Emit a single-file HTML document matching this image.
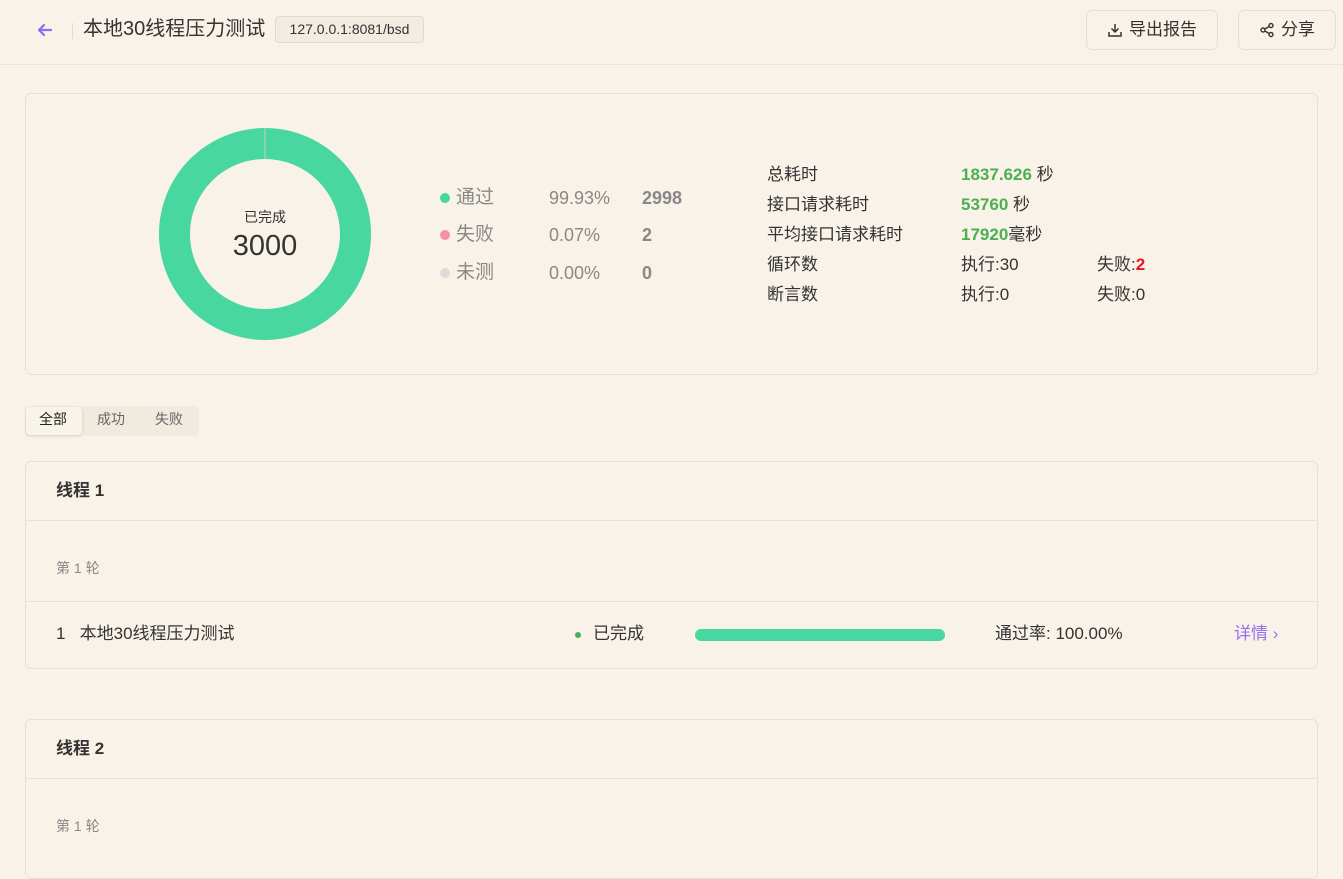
<!DOCTYPE html>
<html><head><meta charset="utf-8"><style>
*{box-sizing:border-box;margin:0;padding:0}
body{width:1343px;height:855px;overflow:hidden;background:#f9f2e8;font-family:"Liberation Sans","Noto Sans CJK SC",sans-serif;color:#333;position:relative}
.abs{position:absolute;line-height:1.2}
.hdr{left:0;top:0;width:1343px;height:65px;border-bottom:1px solid #ebe4d8}
.btn{border:1px solid #e6ded1;border-radius:6px;height:40px;top:10px;display:flex;align-items:center;justify-content:center;font-size:17px;color:#333;gap:6px}
.card{border:1px solid #e8e0d3;border-radius:6px;left:25px;width:1293px}
.g{color:#4caf50;font-weight:bold}
.t16{font-size:17px;color:#333}
.row{position:absolute;left:440px;height:24px;display:flex;align-items:center;font-size:18px;color:#888}
.row i{width:10px;height:10px;border-radius:50%;margin-right:6px}
.row .l{width:93px;font-size:19px;position:relative;top:-3px}
.row .p{width:93px}
</style></head><body>
<div class="abs hdr"></div>
<svg class="abs" style="left:36px;top:22px" width="18" height="16" viewBox="0 0 18 16"><path d="M15 8H3M8 3L3 8l5 5" stroke="#8c6cf0" stroke-width="2.2" fill="none" stroke-linecap="round" stroke-linejoin="round"/></svg>
<div class="abs" style="left:72px;top:23px;width:1px;height:16px;background:#e2dacd"></div>
<div class="abs" style="left:83px;top:17px;font-size:20px;color:#333">本地30线程压力测试</div>
<div class="abs" style="left:275px;top:16px;width:149px;height:27px;border:1px solid #e2dacd;border-radius:4px;background:#f2ece2;font-size:14px;line-height:25px;text-align:center;color:#333">127.0.0.1:8081/bsd</div>
<div class="abs btn" style="left:1086px;width:132px"><svg width="16" height="16" viewBox="0 0 16 16"><path d="M8 2v8M4.5 6.5L8 10l3.5-3.5M2 10v4h12v-4" stroke="#333" stroke-width="1.5" fill="none"/></svg>导出报告</div>
<div class="abs btn" style="left:1238px;width:98px"><svg width="16" height="16" viewBox="0 0 16 16"><circle cx="12" cy="3.5" r="2" stroke="#333" stroke-width="1.4" fill="none"/><circle cx="4" cy="8" r="2" stroke="#333" stroke-width="1.4" fill="none"/><circle cx="12" cy="12.5" r="2" stroke="#333" stroke-width="1.4" fill="none"/><path d="M5.8 7l4.4-2.5M5.8 9l4.4 2.5" stroke="#333" stroke-width="1.4"/></svg>分享</div>

<div class="abs card" style="top:93px;height:282px"></div>
<svg class="abs" style="left:158px;top:127px" width="214" height="214"><circle cx="107" cy="107" r="90.5" fill="none" stroke="#48d7a0" stroke-width="31"/><line x1="107" y1="1" x2="107" y2="32" stroke="#ccc" stroke-width="1"/></svg>
<div class="abs" style="left:165px;top:209px;width:200px;text-align:center;font-size:14px;color:#333">已完成</div>
<div class="abs" style="left:165px;top:229px;width:200px;text-align:center;font-size:29px;color:#333">3000</div>

<div class="row" style="top:186px"><i style="background:#48d7a0"></i><span class="l">通过</span><span class="p">99.93%</span><b>2998</b></div>
<div class="row" style="top:223px"><i style="background:#f68fa8"></i><span class="l">失败</span><span class="p">0.07%</span><b>2</b></div>
<div class="row" style="top:261px"><i style="background:#dcdcdc"></i><span class="l">未测</span><span class="p">0.00%</span><b>0</b></div>

<div class="abs t16" style="left:767px;top:160px;line-height:30px">总耗时<br>接口请求耗时<br>平均接口请求耗时<br>循环数<br>断言数</div>
<div class="abs t16" style="left:961px;top:160px;line-height:30px"><span class="g">1837.626</span> 秒<br><span class="g">53760</span> 秒<br><span class="g">17920</span>毫秒<br>执行:30<br>执行:0</div>
<div class="abs t16" style="left:1097px;top:250px;line-height:30px">失败:<b style="color:#e8141e">2</b><br>失败:0</div>

<div class="abs" style="left:25px;top:406px;width:174px;height:30px;background:#f0eadf;border-radius:4px"></div>
<div class="abs" style="left:26px;top:407px;width:56px;height:28px;background:#f9f4ea;border-radius:4px;box-shadow:0 1px 3px rgba(0,0,0,.12)"></div>
<div class="abs" style="left:39px;top:411px;font-size:14px;color:#222">全部</div>
<div class="abs" style="left:97px;top:411px;font-size:14px;color:#666">成功</div>
<div class="abs" style="left:155px;top:411px;font-size:14px;color:#666">失败</div>

<div class="abs card" style="top:461px;height:208px"></div>
<div class="abs" style="left:26px;top:520px;width:1291px;height:1px;background:#e8e0d3"></div>
<div class="abs" style="left:26px;top:601px;width:1291px;height:1px;background:#e8e0d3"></div>
<div class="abs" style="left:56px;top:481px;font-size:17px;font-weight:bold;color:#333">线程 1</div>
<div class="abs" style="left:56px;top:560px;font-size:14px;color:#888">第 1 轮</div>
<div class="abs t16" style="left:56px;top:624px">1&nbsp;&nbsp; 本地30线程压力测试</div>
<div class="abs" style="left:575px;top:632px;width:6px;height:6px;border-radius:50%;background:#4caf50"></div>
<div class="abs t16" style="left:593px;top:624px">已完成</div>
<div class="abs" style="left:695px;top:629px;width:250px;height:12px;border-radius:6px;background:#48d7a0"></div>
<div class="abs t16" style="left:995px;top:624px">通过率: 100.00%</div>
<div class="abs" style="left:1234px;top:624px;font-size:17px;color:#9670f0">详情 ›</div>

<div class="abs card" style="top:719px;height:160px"></div>
<div class="abs" style="left:26px;top:778px;width:1291px;height:1px;background:#e8e0d3"></div>
<div class="abs" style="left:56px;top:739px;font-size:17px;font-weight:bold;color:#333">线程 2</div>
<div class="abs" style="left:56px;top:818px;font-size:14px;color:#888">第 1 轮</div>
</body></html>
